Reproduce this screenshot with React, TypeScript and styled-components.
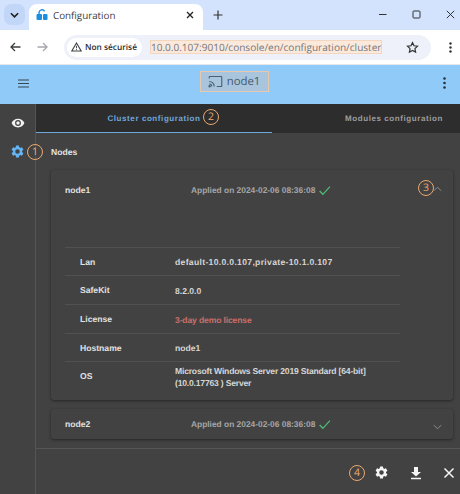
import React from "react";
import styled, { createGlobalStyle } from "styled-components";

const Global = createGlobalStyle`
  html, body { margin: 0; padding: 0; background: #424242; }
  body { font-family: "Liberation Sans", Arial, sans-serif; text-rendering: geometricPrecision; }
  #root { width: 460px; height: 494px; overflow: hidden; }
`;

const Page = styled.div`
  position: relative;
  width: 460px;
  height: 494px;
  display: flex;
  flex-direction: column;
  overflow: hidden;
`;

const TabStrip = styled.div`
  height: 30px;
  background: #d3e3fd;
  display: flex;
  align-items: flex-end;
  padding-left: 4px;
  flex: none;
`;
const TabMenu = styled.div`
  width: 21px;
  height: 21px;
  margin: 0 4px 5px 0;
  border-radius: 7px;
  background: #c2d6f7;
  display: flex;
  align-items: center;
  justify-content: center;
`;
const BrowserTab = styled.div`
  width: 174px;
  height: 26px;
  background: #fff;
  border-radius: 8px 8px 0 0;
  display: flex;
  align-items: center;
  padding: 0 9px 4px 7px;
  box-sizing: border-box;
  font: 9.8px "Open Sans", sans-serif;
  color: #3c4043;
`;
const TabTitle = styled.span`
  margin-left: 5px;
  flex: 1;
`;
const NewTab = styled.div`
  margin: 0 0 10px 10px;
  display: flex;
`;
const WinControls = styled.div`
  margin: 0 0 11px auto;
  display: flex;
  gap: 25px;
  padding-right: 5px;
`;

const Toolbar = styled.div`
  height: 34px;
  background: #fff;
  display: flex;
  align-items: center;
  padding: 0 4px 0 10px;
  flex: none;
  border-bottom: 1px solid #e3e6ea;
`;
const NavIcons = styled.div`
  display: flex;
  gap: 16px;
  margin-right: 16px;
`;
const Omnibox = styled.div`
  flex: 1;
  min-width: 0;
  height: 25px;
  border-radius: 13px;
  background: #eef1f9;
  display: flex;
  align-items: center;
  padding: 0 12px 0 3px;
`;
const Security = styled.div`
  height: 19px;
  border-radius: 10px;
  background: #fff;
  display: flex;
  align-items: center;
  gap: 3px;
  padding: 0 5px 0 4px;
  font: 600 8.3px "Open Sans", sans-serif;
  color: #2b2c30;
  white-space: nowrap;
  flex: none;
`;
const Url = styled.div`
  margin-left: 8px;
  font: 10.05px/12px "Open Sans", sans-serif;
  background: #fbe9dc;
  border: 1px solid #f4d6bf;
  color: #74787d;
  white-space: nowrap;
  flex: none;
`;
const Star = styled.div`
  margin-left: auto;
  display: flex;
`;
const ToolbarEnd = styled.div`
  margin-left: 13px;
  width: 12px;
  display: flex;
  justify-content: center;
`;

const AppBar = styled.div`
  height: 39px;
  background: #90caf9;
  display: flex;
  align-items: center;
  justify-content: center;
  position: relative;
  flex: none;
`;
const BarIcon = styled.button<{ $side: "left" | "right" }>`
  position: absolute;
  ${(p) => (p.$side === "left" ? "left: 17px;" : "right: 14px;")}
  top: 12px;
  padding: 0;
  border: 0;
  background: none;
  display: flex;
`;
const NodeChip = styled.div`
  width: 69px;
  height: 21px;
  box-sizing: border-box;
  margin: 0 0 7px 8px;
  background: #a9c5de;
  border: 1px solid #e8c9ad;
  display: flex;
  align-items: center;
  justify-content: center;
  gap: 4px;
  font: 11.4px "Open Sans", sans-serif;
  color: #455a6d;
`;

const Main = styled.div`
  flex: 1;
  display: flex;
  min-height: 0;
`;
const Rail = styled.div`
  width: 36px;
  flex: none;
  background: #424242;
  border-right: 1px solid #555;
  box-sizing: border-box;
  display: flex;
  flex-direction: column;
  align-items: center;
  padding-top: 12px;
  gap: 14px;
`;
const Content = styled.div`
  flex: 1;
  display: flex;
  flex-direction: column;
  min-width: 0;
`;
const Tabs = styled.div`
  height: 29px;
  display: flex;
  background: #2d2d2d;
  flex: none;
`;
const TabItem = styled.div<{ $active?: boolean }>`
  display: flex;
  align-items: center;
  justify-content: center;
  font-size: 8px;
  font-weight: 700;
  letter-spacing: 0.58px;
  color: ${(p) => (p.$active ? "#6fa8dc" : "#9e9e9e")};
  border-bottom: 1px solid ${(p) => (p.$active ? "#6fa8dc" : "#2d2d2d")};
  box-sizing: border-box;
  width: ${(p) => (p.$active ? "236px" : "187px")};
  padding-left: ${(p) => (p.$active ? "0" : "57px")};
`;
const Scroll = styled.div`
  flex: 1;
  padding: 0 7px 0 15px;
  display: flex;
  flex-direction: column;
  min-height: 0;
`;
const SectionTitle = styled.div`
  font-size: 8.6px;
  font-weight: 700;
  color: #e4e4e4;
  height: 37px;
  line-height: 38px;
`;
const Card = styled.div`
  background: #424242;
  border-radius: 3px;
  box-shadow: 0 1px 3px rgba(0, 0, 0, 0.42), 0 0 1px rgba(0, 0, 0, 0.15);
  margin-bottom: 9px;
`;
const CardHead = styled.div<{ $h: number }>`
  height: ${(p) => p.$h}px;
  display: flex;
  align-items: center;
  padding: 0 11px 0 14px;
`;
const NodeName = styled.div`
  font-size: 8.6px;
  font-weight: 700;
  color: #e0e0e0;
  width: 126px;
`;
const Applied = styled.div`
  font-size: 8.4px;
  font-weight: 700;
  color: #a6a6a6;
  display: flex;
  align-items: center;
  gap: 3px;
`;
const Chevron = styled.div<{ $up?: boolean }>`
  margin-left: auto;
  display: flex;
  margin-top: ${(p) => (p.$up ? "-3px" : "5px")};
`;
const Details = styled.div`
  padding: 37px 53px 10px 14px;
`;
const Row = styled.div<{ $h: number }>`
  height: ${(p) => p.$h}px;
  display: flex;
  align-items: center;
  border-top: 1px solid #515151;
  box-sizing: border-box;
  font-size: 8.6px;
  font-weight: 700;
  color: #d6d6d6;
`;
const RowLabel = styled.div`
  width: 110px;
  padding-left: 15px;
  box-sizing: border-box;
  flex: none;
  color: #e0e0e0;
`;
const RowValue = styled.div<{ $warn?: boolean; $track?: number }>`
  line-height: 12px;
  margin-top: 1px;
  letter-spacing: ${(p) => p.$track ?? 0}px;
  ${(p) => p.$warn && "color: #c96f6b;"}
`;
const Footer = styled.div`
  margin-top: auto;
  height: 46px;
  border-top: 1px solid #555;
  box-sizing: border-box;
  display: flex;
  align-items: center;
  justify-content: flex-end;
  gap: 20px;
  padding: 2px 5px 0 0;
  flex: none;
  margin-left: -15px;
  margin-right: -7px;
`;
const Badge = styled.div<{ $x: number; $y: number }>`
  position: absolute;
  left: ${(p) => p.$x}px;
  top: ${(p) => p.$y}px;
  width: 16px;
  height: 16px;
  border: 1.3px solid #eba86f;
  border-radius: 50%;
  display: flex;
  align-items: center;
  justify-content: center;
  font: 10.5px "Open Sans", sans-serif;
  color: #eba86f;
  box-sizing: border-box;
`;

const Gear = ({ size, color }: { size: number; color: string }) => (
  <svg width={size} height={size} viewBox="0 0 24 24" fill={color}>
    <path d="M19.14 12.94c.04-.3.06-.61.06-.94 0-.32-.02-.64-.07-.94l2.03-1.58a.49.49 0 0 0 .12-.61l-1.92-3.32a.49.49 0 0 0-.59-.22l-2.39.96c-.5-.38-1.03-.7-1.62-.94l-.36-2.54a.48.48 0 0 0-.48-.41h-3.84a.48.48 0 0 0-.47.41l-.36 2.54c-.59.24-1.13.57-1.62.94l-2.39-.96a.48.48 0 0 0-.59.22L2.74 8.87a.48.48 0 0 0 .12.61l2.03 1.58c-.05.3-.09.63-.09.94s.02.64.07.94l-2.03 1.58a.49.49 0 0 0-.12.61l1.92 3.32c.12.22.37.29.59.22l2.39-.96c.5.38 1.03.7 1.62.94l.36 2.54c.05.24.24.41.48.41h3.84c.24 0 .44-.17.47-.41l.36-2.54c.59-.24 1.13-.56 1.62-.94l2.39.96c.22.08.47 0 .59-.22l1.92-3.32a.48.48 0 0 0-.12-.61l-2.01-1.58zM12 15.6A3.6 3.6 0 1 1 12 8.4a3.6 3.6 0 0 1 0 7.2z" />
  </svg>
);
const Check = () => (
  <svg width="13" height="13" viewBox="0 0 24 24" fill="none" stroke="#4fbf7a" strokeWidth="2.2">
    <path d="M3 13l6 6L22 5" />
  </svg>
);
const Chev = ({ up }: { up?: boolean }) => (
  <svg width="9" height="6" viewBox="0 0 10 6" fill="none" stroke="#8f8f8f" strokeWidth="1.1">
    <path d={up ? "M1 5l4-4 4 4" : "M1 1l4 4 4-4"} />
  </svg>
);

export default function App() {
  return (
    <Page>
      <Global />
      <TabStrip>
        <TabMenu>
          <svg width="9" height="6" viewBox="0 0 10 6" fill="none" stroke="#1f1f1f" strokeWidth="1.8">
            <path d="M1 1l4 4 4-4" />
          </svg>
        </TabMenu>
        <BrowserTab>
          <svg width="12" height="12" viewBox="0 0 12 12">
            <path d="M3 5V3.6a3 3 0 0 1 5.6-1.3" fill="none" stroke="#1a8fe0" strokeWidth="1.4" />
            <rect x="0.5" y="5" width="5.5" height="6" rx="1" fill="#1a8fe0" />
            <rect x="7" y="5" width="4.5" height="6" rx="1" fill="#1a8fe0" />
          </svg>
          <TabTitle>Configuration</TabTitle>
          <svg width="8" height="8" viewBox="0 0 8 8" stroke="#222" strokeWidth="1.3">
            <path d="M1 1l6 6M7 1L1 7" />
          </svg>
        </BrowserTab>
        <NewTab>
          <svg width="10" height="10" viewBox="0 0 10 10" stroke="#333" strokeWidth="1.2">
            <path d="M5 .5v9M.5 5h9" />
          </svg>
        </NewTab>
        <WinControls>
          <svg width="9" height="9" viewBox="0 0 9 9" stroke="#333" strokeWidth="1">
            <path d="M1 4.5h7.5" />
          </svg>
          <svg width="9" height="9" viewBox="0 0 9 9" fill="none" stroke="#333" strokeWidth="1">
            <rect x="1" y="1" width="7" height="7" rx="0.8" />
          </svg>
          <svg width="9" height="9" viewBox="0 0 9 9" stroke="#333" strokeWidth="1">
            <path d="M.8.8l7.4 7.4M8.2.8L.8 8.2" />
          </svg>
        </WinControls>
      </TabStrip>
      <Toolbar>
        <NavIcons>
          <svg width="11" height="10" viewBox="0 0 11 10" fill="none" stroke="#3c4043" strokeWidth="1.3">
            <path d="M10.5 5H1M5 1L1 5l4 4" />
          </svg>
          <svg width="11" height="10" viewBox="0 0 11 10" fill="none" stroke="#a5a8ad" strokeWidth="1.3">
            <path d="M.5 5H10M6 1l4 4-4 4" />
          </svg>
        </NavIcons>
        <Omnibox>
          <Security>
            <svg width="11" height="10" viewBox="0 0 11 10">
              <path d="M5.5 1L10.2 9H.8z" fill="none" stroke="#3c4043" strokeWidth="1.1" />
              <path d="M5.5 3.8v2.4M5.5 6.9v1" stroke="#3c4043" strokeWidth="0.9" />
            </svg>
            Non sécurisé
          </Security>
          <Url>10.0.0.107:9010/console/en/configuration/cluster</Url>
          <Star>
            <svg width="13" height="13" viewBox="0 0 24 24" fill="none" stroke="#333" strokeWidth="2.2">
              <path d="M12 3l2.8 5.9 6.4.8-4.700 4.400 1.200 6.400L12 17.400l-5.700 3.100 1.200-6.400L2.800 9.700l6.400-.8z" />
            </svg>
          </Star>
        </Omnibox>
        <ToolbarEnd>
          <svg width="3" height="11" viewBox="0 0 3 11" fill="#333">
            <circle cx="1.5" cy="1.5" r="1.2" />
            <circle cx="1.5" cy="5.5" r="1.2" />
            <circle cx="1.5" cy="9.5" r="1.2" />
          </svg>
        </ToolbarEnd>
      </Toolbar>
      <AppBar>
        <BarIcon $side="left">
          <svg width="13" height="13" viewBox="0 0 13 13" stroke="#37474f" strokeWidth="1">
            <path d="M1 3h11M1 6.5h11M1 10h11" />
          </svg>
        </BarIcon>
        <NodeChip>
          <svg width="15" height="13" viewBox="0 0 24 20" fill="none" stroke="#4b6072" strokeWidth="1.8">
            <path d="M2 5V3a1 1 0 0 1 1-1h18a1 1 0 0 1 1 1v14a1 1 0 0 1-1 1h-7" />
            <path d="M2 10a8 8 0 0 1 8 8M2 14a4 4 0 0 1 4 4" />
            <circle cx="2.5" cy="17.5" r="1" fill="#4b6072" />
          </svg>
          node1
        </NodeChip>
        <BarIcon $side="right">
          <svg width="3" height="12" viewBox="0 0 3 12" fill="#263238">
            <circle cx="1.5" cy="1.5" r="1.3" />
            <circle cx="1.5" cy="6" r="1.3" />
            <circle cx="1.5" cy="10.5" r="1.3" />
          </svg>
        </BarIcon>
      </AppBar>
      <Main>
        <Rail>
          <svg width="14" height="14" viewBox="0 0 24 24" fill="#f2f2f2">
            <path d="M12 4.5C7 4.5 2.7 7.6 1 12c1.7 4.4 6 7.500 11 7.500s9.300-3.100 11-7.500c-1.700-4.400-6-7.500-11-7.500zM12 17a5 5 0 1 1 0-10 5 5 0 0 1 0 10zm0-8a3 3 0 1 0 0 6 3 3 0 0 0 0-6z" />
          </svg>
          <Gear size={15} color="#64b5f6" />
        </Rail>
        <Content>
          <Tabs>
            <TabItem $active>Cluster configuration</TabItem>
            <TabItem>Modules configuration</TabItem>
          </Tabs>
          <Scroll>
            <SectionTitle>Nodes</SectionTitle>
            <Card>
              <CardHead $h={40}>
                <NodeName>node1</NodeName>
                <Applied>
                  Applied on 2024-02-06 08:36:08 <Check />
                </Applied>
                <Chevron $up>
                  <Chev up />
                </Chevron>
              </CardHead>
              <Details>
                <Row $h={28}>
                  <RowLabel>Lan</RowLabel>
                  <RowValue $track={0.32}>default-10.0.0.107,private-10.1.0.107</RowValue>
                </Row>
                <Row $h={29}>
                  <RowLabel>SafeKit</RowLabel>
                  <RowValue>8.2.0.0</RowValue>
                </Row>
                <Row $h={29}>
                  <RowLabel>License</RowLabel>
                  <RowValue $warn $track={-0.15}>3-day demo license</RowValue>
                </Row>
                <Row $h={28}>
                  <RowLabel>Hostname</RowLabel>
                  <RowValue>node1</RowValue>
                </Row>
                <Row $h={29}>
                  <RowLabel>OS</RowLabel>
                  <RowValue $track={-0.2}>
                    Microsoft Windows Server 2019 Standard [64-bit]
                    <br />
                    (10.0.17763 ) Server
                  </RowValue>
                </Row>
              </Details>
            </Card>
            <Card>
              <CardHead $h={30}>
                <NodeName>node2</NodeName>
                <Applied>
                  Applied on 2024-02-06 08:36:08 <Check />
                </Applied>
                <Chevron>
                  <Chev />
                </Chevron>
              </CardHead>
            </Card>
            <Footer>
              <Gear size={15} color="#f5f5f5" />
              <svg width="14" height="14" viewBox="0 0 14 14" fill="#f5f5f5">
                <path d="M5 1h4v5h3L7 10.500 2 6h3zM2 11.800h10v1.400H2z" />
              </svg>
              <svg width="12" height="12" viewBox="0 0 12 12" stroke="#f5f5f5" strokeWidth="1.500">
                <path d="M1.500 1.500l9 9M10.500 1.500l-9 9" />
              </svg>
            </Footer>
          </Scroll>
        </Content>
      </Main>
      <Badge $x={27} $y={144}>1</Badge>
      <Badge $x={203} $y={109}>2</Badge>
      <Badge $x={418} $y={180}>3</Badge>
      <Badge $x={349} $y={465}>4</Badge>
    </Page>
  );
}
